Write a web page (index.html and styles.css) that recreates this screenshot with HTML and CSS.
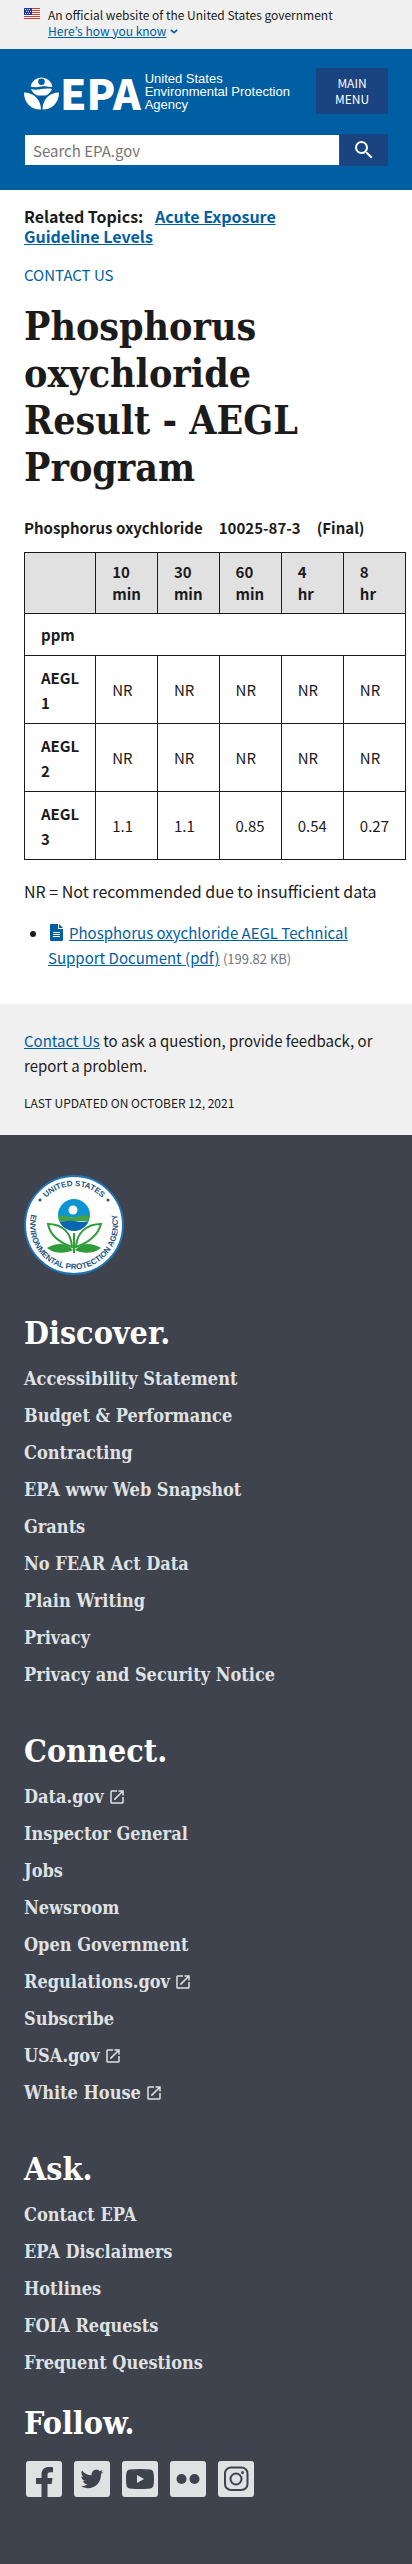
FILE: index.html
```html
<!DOCTYPE html>
<html lang="en">
<head>
<meta charset="utf-8">
<meta name="viewport" content="width=device-width, initial-scale=1">
<title>Phosphorus oxychloride Result - AEGL Program | US EPA</title>
<link rel="stylesheet" href="styles.css">
</head>
<body>
<svg class="sprite" width="0" height="0" aria-hidden="true">
  <symbol id="launch" viewBox="0 0 24 24"><path d="M19 19H5V5h7V3H5a2 2 0 0 0-2 2v14a2 2 0 0 0 2 2h14c1.100 0 2-.9 2-2v-7h-2v7zM14 3v2h3.590l-9.830 9.830 1.410 1.410L19 6.410V10h2V3h-7z"/></symbol>
</svg>

<section class="banner" aria-label="Official website of the United States government">
  <svg class="flag" viewBox="0 0 16 11" aria-hidden="true">
    <path fill="#fff" d="M0 0h16v11H0z"/>
    <path stroke="#d8372c" d="M0 .5h16M0 2.500h16M0 4.500h16M0 6.500h16M0 8.500h16M0 10.500h16"/>
    <path fill="#1e33b1" d="M0 0h8v7H0z"/>
    <path stroke="#fff" stroke-dasharray="1 1" d="M1 1.500h6M2 3.500h5M1 5.500h6"/>
  </svg>
  <div class="banner-text">
    <p>An official website of the United States government</p>
    <button class="banner-toggle" type="button"><span>Here’s how you know</span><svg viewBox="0 0 10 6" aria-hidden="true"><path d="M1 1l4 3.500L9 1"/></svg></button>
  </div>
</section>

<header class="header">
  <div class="header-top">
    <a class="logo" href="#">
      <svg class="logo-flower" viewBox="0 0 35 36" aria-hidden="true">
        <path d="M6.500 12.500a11.200 11.200 0 0 1 22 0c-4 1.500-6-1-11 0s-8 .8-11 0zM17.500 4.500a3.300 3.300 0 1 0 0 6.600 3.300 3.300 0 0 0 0-6.600z" fill-rule="evenodd"/>
        <path d="M7 15c4 1.200 7 .5 10.500 0s7-.8 10.500 0a11 11 0 0 1-6.500 6.500h-8A11 11 0 0 1 7 15z"/>
        <path d="M0 18.500c9 0 17 6.500 17 17C6 35.500 0 28 0 18.500zM35 18.500c-9 0-16.500 6.500-16.500 17C29 35.500 35 28 35 18.500z"/>
      </svg>
      <span class="logo-epa">EPA</span>
      <span class="logo-name">United States<br>Environmental Protection<br>Agency</span>
    </a>
    <button class="menu-button" type="button">MAIN MENU</button>
  </div>
  <form class="search" role="search">
    <input type="search" placeholder="Search EPA.gov" aria-label="Search EPA.gov">
    <button type="button" aria-label="Search"><svg viewBox="0 0 24 24" aria-hidden="true"><path d="M15.500 14h-.79l-.28-.27A6.471 6.471 0 0 0 16 9.500 6.500 6.500 0 1 0 9.500 16c1.610 0 3.090-.59 4.230-1.570l.27.28v.79l5 4.990L20.490 19l-4.990-5zm-6 0C7.010 14 5 11.990 5 9.500S7.010 5 9.500 5 14 7.010 14 9.500 11.990 14 9.500 14z"/></svg></button>
  </form>
</header>

<main class="main">
  <p class="related">Related Topics: <a href="#">Acute Exposure Guideline Levels</a></p>
  <a class="contact-link" href="#">CONTACT US</a>
  <h1>Phosphorus oxychloride Result - AEGL Program</h1>
  <h2 class="substance"><span>Phosphorus oxychloride</span><span>10025-87-3</span><span>(Final)</span></h2>
  <table class="results">
    <thead>
      <tr><td></td><th scope="col">10<br>min</th><th scope="col">30<br>min</th><th scope="col">60<br>min</th><th scope="col">4<br>hr</th><th scope="col">8<br>hr</th></tr>
    </thead>
    <tbody>
      <tr><th colspan="6" scope="colgroup">ppm</th></tr>
      <tr><th scope="row">AEGL 1</th><td>NR</td><td>NR</td><td>NR</td><td>NR</td><td>NR</td></tr>
      <tr><th scope="row">AEGL 2</th><td>NR</td><td>NR</td><td>NR</td><td>NR</td><td>NR</td></tr>
      <tr><th scope="row">AEGL 3</th><td>1.1</td><td>1.1</td><td>0.85</td><td>0.54</td><td>0.27</td></tr>
    </tbody>
  </table>
  <p class="note">NR = Not recommended due to insufficient data</p>
  <ul class="documents">
    <li><a href="#"><svg class="file-icon" viewBox="0 0 13 17" aria-hidden="true"><path d="M1 0h7v5h5v11a1 1 0 0 1-1 1H1a1 1 0 0 1-1-1V1a1 1 0 0 1 1-1zM9 0l4 4H9zM3 8v1h7V8zM3 10v1h7v-1zM3 12v1h7v-1z" fill-rule="evenodd"/></svg>Phosphorus oxychloride AEGL Technical Support Document (pdf)</a> <span class="file-size">(199.82 KB)</span></li>
  </ul>
</main>

<section class="page-info">
  <p><a href="#">Contact Us</a> to ask a question, provide feedback, or report a problem.</p>
  <p class="updated">LAST UPDATED ON OCTOBER 12, 2021</p>
</section>

<footer class="footer">
  <svg class="seal" viewBox="0 0 100 100" role="img" aria-label="United States Environmental Protection Agency seal">
    <defs>
      <path id="arc-top" d="M11 50a39 39 0 0 1 78 0"/>
      <path id="arc-bottom" d="M19.500 18.500A44 44 0 1 0 80.500 18.500"/>
      <clipPath id="globe"><circle cx="50" cy="40" r="16"/></clipPath>
    </defs>
    <circle cx="50" cy="50" r="49" fill="#fff" stroke="#1f74b5" stroke-width="2"/>
    <g class="seal-text" text-anchor="middle">
      <text><textPath href="#arc-top" startOffset="50%">UNITED STATES</textPath></text>
      <text><textPath href="#arc-bottom" startOffset="50%">ENVIRONMENTAL PROTECTION AGENCY</textPath></text>
    </g>
    <circle cx="16" cy="25" r="1.500" fill="#24557f"/>
    <circle cx="84" cy="25" r="1.500" fill="#24557f"/>
    <g clip-path="url(#globe)">
      <path fill="#0f94d2" d="M34 24h32v18H34z"/>
      <path fill="#45a244" d="M34 41c6-2 10 2 16 1s10-3 16-1v5H34z"/>
      <path fill="#0967b1" d="M34 46c6 1 10-1 16 0s10 1 16 0v12H34z"/>
    </g>
    <circle cx="49" cy="35" r="4.500" fill="#fff"/>
    <g fill="none" stroke="#2f9b39" stroke-width="2">
      <path d="M50 58v20M48 72C34 67 26 60 24 49c14 0 23 8 24 23zM52 72c14-5 22-12 25-23-14 0-24 8-25 23z"/>
    </g>
    <path fill="#2f9b39" d="M49 75c-8-8-17-7-26-2 8 6 18 6 26 2zM51 75c8-8 17-7 26-2-8 6-18 6-26 2z"/>
  </svg>

  <nav class="footer-group" aria-labelledby="discover">
    <h2 id="discover">Discover.</h2>
    <ul>
      <li><a href="#">Accessibility Statement</a></li>
      <li><a href="#">Budget &amp; Performance</a></li>
      <li><a href="#">Contracting</a></li>
      <li><a href="#">EPA www Web Snapshot</a></li>
      <li><a href="#">Grants</a></li>
      <li><a href="#">No FEAR Act Data</a></li>
      <li><a href="#">Plain Writing</a></li>
      <li><a href="#">Privacy</a></li>
      <li><a href="#">Privacy and Security Notice</a></li>
    </ul>
  </nav>
  <nav class="footer-group" aria-labelledby="connect">
    <h2 id="connect">Connect.</h2>
    <ul>
      <li><a href="#">Data.gov<svg class="launch"><use href="#launch"/></svg></a></li>
      <li><a href="#">Inspector General</a></li>
      <li><a href="#">Jobs</a></li>
      <li><a href="#">Newsroom</a></li>
      <li><a href="#">Open Government</a></li>
      <li><a href="#">Regulations.gov<svg class="launch"><use href="#launch"/></svg></a></li>
      <li><a href="#">Subscribe</a></li>
      <li><a href="#">USA.gov<svg class="launch"><use href="#launch"/></svg></a></li>
      <li><a href="#">White House<svg class="launch"><use href="#launch"/></svg></a></li>
    </ul>
  </nav>
  <nav class="footer-group" aria-labelledby="ask">
    <h2 id="ask">Ask.</h2>
    <ul>
      <li><a href="#">Contact EPA</a></li>
      <li><a href="#">EPA Disclaimers</a></li>
      <li><a href="#">Hotlines</a></li>
      <li><a href="#">FOIA Requests</a></li>
      <li><a href="#">Frequent Questions</a></li>
    </ul>
  </nav>
  <section class="follow">
    <h2>Follow.</h2>
    <div class="social">
      <a href="#" aria-label="Facebook"><svg viewBox="0 0 36 36"><path d="M15.500 36V23H10v-6h5.500v-3.500c0-5 3-7.500 7.500-7.500 1.500 0 3 .1 4 .3v5h-2.500c-2.300 0-3 1-3 2.700v3h5l-.8 6h-4.200v13z"/></svg></a>
      <a href="#" aria-label="Twitter"><svg viewBox="0 0 36 36"><path transform="translate(6.500 6.500) scale(.95)" d="M23.953 4.570a10 10 0 0 1-2.825.775 4.958 4.958 0 0 0 2.163-2.723c-.951.555-2.005.959-3.127 1.184a4.920 4.920 0 0 0-8.384 4.482C7.690 8.095 4.067 6.130 1.640 3.162a4.822 4.822 0 0 0-.666 2.475c0 1.710.87 3.213 2.188 4.096a4.904 4.904 0 0 1-2.228-.616v.06a4.923 4.923 0 0 0 3.946 4.827 4.996 4.996 0 0 1-2.212.085 4.936 4.936 0 0 0 4.604 3.417 9.867 9.867 0 0 1-6.102 2.105c-.39 0-.779-.023-1.170-.067a13.995 13.995 0 0 0 7.557 2.209c9.053 0 13.998-7.496 13.998-13.985 0-.21 0-.42-.015-.63A9.935 9.935 0 0 0 24 4.590z"/></svg></a>
      <a href="#" aria-label="YouTube"><svg viewBox="0 0 36 36"><path fill-rule="evenodd" d="M8 8.500c6-.8 14-.8 20 0 3 .3 4 2 4 9.500s-1 9.200-4 9.500c-6 .8-14 .8-20 0-3-.3-4-2-4-9.500s1-9.200 4-9.500zM15 14v8l7-4z"/></svg></a>
      <a href="#" aria-label="Flickr"><svg viewBox="0 0 36 36"><circle cx="11.500" cy="18" r="5"/><circle cx="24.500" cy="18" r="5"/></svg></a>
      <a href="#" aria-label="Instagram"><svg class="instagram" viewBox="0 0 36 36"><rect x="7" y="6.500" width="22.500" height="22.500" rx="6"/><circle cx="18" cy="18" r="5.500"/><circle class="dot" cx="24.500" cy="11.500" r="1.500"/></svg></a>
    </div>
  </section>
</footer>
</body>
</html>
```
FILE: styles.css
```css
* {
  box-sizing: border-box;
}

body {
  margin: 0;
  background: #fff;
  color: #1b1b1b;
  font-family: "Noto Sans CJK JP", "Noto Sans", sans-serif;
  font-size: 15px;
  line-height: 25px;
}

h1, h2, p, ul {
  margin: 0;
  padding: 0;
}

a {
  color: #005ea2;
}

button, input {
  margin: 0;
  border: 0;
  border-radius: 0;
  padding: 0;
  font: inherit;
}

.sprite {
  position: absolute;
}

/* Government banner */
.banner {
  display: flex;
  gap: 8px;
  padding: 7px 24px 10px;
  background: #f0f0f0;
  font-size: 12px;
  line-height: 16px;
}

.flag {
  width: 16px;
  height: 11px;
  margin-top: 1px;
}

.banner-toggle {
  display: flex;
  align-items: center;
  gap: 4px;
  background: none;
  color: #005ea2;
  line-height: 16px;
}

.banner-toggle span {
  text-decoration: underline;
}

.banner-toggle svg {
  width: 8px;
  height: 5px;
  fill: none;
  stroke: #005ea2;
  stroke-width: 2;
}

/* Header */
.header {
  padding: 19px 24px 24px;
  background: #005ea2;
}

.header-top {
  display: flex;
  align-items: flex-start;
  justify-content: space-between;
}

.logo {
  display: flex;
  align-items: center;
  margin-top: 4px;
  color: #fff;
  text-decoration: none;
}

.logo-flower {
  width: 35px;
  height: 36px;
  fill: #fff;
}

.logo-epa {
  margin-left: 1px;
  font-size: 42px;
  font-weight: 900;
  line-height: 36px;
}

.logo-name {
  margin-left: 4px;
  font-family: "Liberation Sans", Arial, sans-serif;
  font-size: 13px;
  line-height: 13px;
  white-space: nowrap;
}

.menu-button {
  width: 72px;
  padding: 7px 16px;
  background: #1a4480;
  color: #fff;
  font-size: 12px;
  line-height: 16px;
}

.search {
  display: flex;
  margin-top: 20px;
}

.search input {
  flex: 1;
  min-width: 0;
  height: 32px;
  border: 1px solid #005ea2;
  padding: 0 8px;
  background: #fff;
  background-clip: padding-box;
}

.search input::placeholder {
  color: #757575;
}

.search button {
  display: flex;
  align-items: center;
  justify-content: center;
  width: 48px;
  background: #1a4480;
}

.search svg {
  width: 24px;
  height: 24px;
  fill: #fff;
}

/* Main content */
.main {
  padding: 16px 24px 33px;
}

.related {
  padding-right: 48px;
  font-size: 16px;
  font-weight: 700;
  line-height: 20px;
}

.related a {
  margin-left: 8px;
}

.contact-link {
  display: inline-block;
  margin-top: 16px;
  text-decoration: none;
}

h1 {
  margin-top: 16px;
  padding-right: 48px;
  font-family: "DejaVu Serif Condensed", "DejaVu Serif", serif;
  font-size: 39px;
  line-height: 47px;
}

.substance {
  display: flex;
  gap: 16px;
  margin-top: 24px;
  font-size: 15px;
  line-height: 25px;
}

.results {
  margin-top: 12px;
  border-collapse: collapse;
}

.results th,
.results td {
  border: 1px solid #1b1b1b;
  padding: 8px 16px;
  text-align: left;
}

.results thead th,
.results thead td {
  background: #e1e1e1;
  line-height: 22px;
}

.results tbody tr {
  height: 68px;
}

.results tbody tr:first-child {
  height: 42px;
}

.note {
  margin-top: 19px;
  font-size: 16px;
}

.documents {
  margin-top: 16px;
  padding-left: 24px;
}

.file-icon {
  width: 13px;
  height: 17px;
  margin: 0 6px 0 2px;
  fill: #005ea2;
  vertical-align: -2px;
}

.file-size {
  color: #71767a;
  font-size: 13px;
}

.page-info {
  padding: 24px 24px 20px;
  background: #f0f0f0;
}

.updated {
  margin-top: 12px;
  font-size: 12px;
}

/* Footer */
.footer {
  padding: 40px 24px 67px;
  background: #3f434e;
  font-family: "DejaVu Serif Condensed", "DejaVu Serif", serif;
  font-weight: 700;
}

.seal {
  display: block;
  width: 100px;
  height: 100px;
}

.seal-text {
  fill: #24557f;
  font-family: "Liberation Sans", Arial, sans-serif;
  font-size: 8px;
}

.footer-group {
  margin-top: 40px;
}

.footer-group + .footer-group {
  margin-top: 46px;
}

.follow {
  margin-top: 30px;
}

.footer h2 {
  color: #fff;
  font-size: 32px;
  line-height: 36px;
}

.footer ul {
  display: grid;
  gap: 12px;
  margin-top: 15px;
  list-style: none;
  font-size: 18px;
}

.footer a {
  color: #dfe1e2;
  text-decoration: none;
}

.launch {
  width: 18px;
  height: 18px;
  margin-left: 4px;
  fill: #dfe1e2;
  vertical-align: -3px;
}

.social {
  display: flex;
  gap: 12px;
  margin-top: 20px;
  padding-left: 2px;
}

.social a {
  width: 36px;
  height: 36px;
  border-radius: 3px;
  background: #dfe1e2;
}

.social svg {
  display: block;
  fill: #3f434e;
}

.social .instagram {
  fill: none;
  stroke: #3f434e;
  stroke-width: 2;
}

.social .instagram .dot {
  fill: #3f434e;
  stroke: none;
}
```
